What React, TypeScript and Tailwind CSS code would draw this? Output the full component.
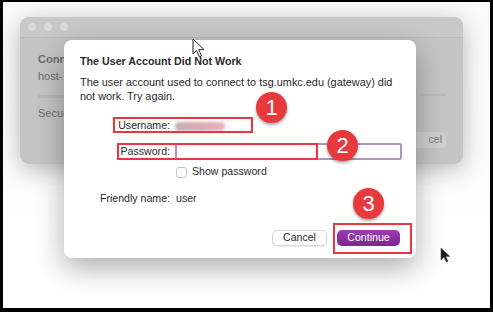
import React from "react";

const font = { fontFamily: '"Liberation Sans", Arial, sans-serif' };

const Badge = ({ n, className }: { n: string; className: string }) => (
  <div
    className={`absolute flex h-[31px] w-[31px] items-center justify-center rounded-full bg-[#e8393d] text-[22px] text-white shadow-[0_2px_3px_rgba(0,0,0,0.35)] ${className}`}
  >
    {n}
  </div>
);

const BackWindow = () => (
  <div className="absolute left-[17px] top-[15px] h-[147px] w-[443px] overflow-hidden rounded-[9px] bg-[#c4c4c4] shadow-[0_6px_24px_rgba(0,0,0,0.28)]">
    {/* title bar */}
    <div className="flex h-[21px] items-center gap-[8px] border-b border-[#b9b9b9] bg-[#c8c8c8] pl-[8px]">
      <div className="h-[8px] w-[8px] rounded-full bg-[#d8d8d8]" />
      <div className="h-[8px] w-[8px] rounded-full bg-[#d8d8d8]" />
      <div className="h-[8px] w-[8px] rounded-full bg-[#d8d8d8]" />
    </div>
    <div className="flex text-[11px] text-[#6c6c6c]">
      <div className="w-[50px] whitespace-nowrap pl-[18px]">
        <div className="mt-[14px] font-bold leading-[14px]">Conn</div>
        <div className="mt-[3px] leading-[14px]">host-</div>
        <div className="mt-[12px] h-[3px] w-full rounded bg-[#b8b8b8]" />
        <div className="mt-[8px] leading-[14px]">Secur</div>
      </div>
      <div className="ml-auto mr-[17px] flex flex-col items-end">
        <div className="mt-[56px] h-[2px] w-[26px] bg-[#bababa]" />
        <div className="mt-[36px] flex h-[16px] w-[44px] items-center justify-end rounded-[4px] bg-[#cfcfcf] pr-[4px] text-[10.5px] text-[#777]">
          cel
        </div>
      </div>
    </div>
  </div>
);

const Dialog = () => (
  <div className="absolute left-[61px] top-[38px] flex h-[218px] w-[352px] flex-col rounded-[8px] bg-white pl-[16px] pr-[14px] text-[#2a2a2a] shadow-[0_10px_28px_rgba(0,0,0,0.32)]">
    <div className="mt-[13px] text-[10.7px] font-bold leading-[16px]">The User Account Did Not Work</div>
    <div className="mt-[6px] whitespace-nowrap text-[10.9px] leading-[14px]">
      The user account used to connect to tsg.umkc.edu (gateway) did
      <br />
      not work. Try again.
    </div>

    <div className="mt-[15px] flex h-[16px] items-center text-[10.6px]">
      <div className="w-[90px] text-right">Username:</div>
      <div className="ml-[5px] h-[9px] w-[50px] rounded-sm bg-gradient-to-r from-[#bfb1b3] via-[#d9a9af] to-[#edb3b9] blur-[1.5px]" />
    </div>

    <div className="mt-[9px] flex h-[17px] items-center text-[10.6px]">
      <div className="w-[90px] text-right">Password:</div>
      <div className="ml-[5px] h-[17px] w-[227px] rounded-[2px] border-2 border-[#ae95bc] bg-white" />
    </div>

    <div className="mt-[6px] flex h-[12px] items-center text-[10.6px]">
      <div className="ml-[96px] h-[11px] w-[11px] rounded-[3px] border border-[#c4c4c4] bg-white" />
      <div className="ml-[5px]">Show password</div>
    </div>

    <div className="mt-[14px] flex h-[14px] items-center text-[10.6px]">
      <div className="w-[90px] text-right">Friendly name:</div>
      <div className="ml-[6px]">user</div>
    </div>

    <div className="mt-[24px] flex justify-end gap-[10px] pr-[2px]">
      <div className="flex h-[16px] w-[55px] items-center justify-center rounded-[5px] border border-[#d6d6d6] bg-white text-[10.6px] shadow-[0_1px_1px_rgba(0,0,0,0.08)]">
        Cancel
      </div>
      <div className="flex h-[16px] w-[63px] items-center justify-center rounded-[5px] bg-gradient-to-b from-[#9c3cb2] to-[#7f2394] text-[10.6px] text-white">
        Continue
      </div>
    </div>
  </div>
);

const ArrowOutline = () => (
  <svg className="absolute left-[189px] top-[36px]" width="14" height="21" viewBox="0 0 14 21">
    <path d="M1 1 L1 16 L4.5 12.5 L7.5 19 L9.5 18 L6.8 11.6 L12 11.6 Z" fill="white" stroke="#222" strokeWidth="1" strokeLinejoin="round" />
  </svg>
);

const ArrowBlack = () => (
  <svg className="absolute left-[437px] top-[245px]" width="12" height="17" viewBox="0 0 12 17">
    <path d="M1 1 L1 13 L4 10.2 L6.3 15 L8 14.2 L5.8 9.6 L10 9.6 Z" fill="#1a1a1a" stroke="#555" strokeWidth="0.6" />
  </svg>
);

export default function App() {
  return (
    <div className="h-[312px] w-[493px] overflow-hidden bg-black" style={font}>
      <div className="relative ml-[3px] mt-[2px] h-[306px] w-[487px] overflow-hidden bg-gradient-to-b from-[#fafafa] to-[#ffffff]">
        <BackWindow />
        <Dialog />

        {/* annotations */}
        <div className="absolute left-[110px] top-[115px] h-[16px] w-[140px] border-2 border-[#ec3540]" />
        <div className="absolute left-[114px] top-[141px] h-[17px] w-[201px] border-2 border-[#ec3540]" />
        <div className="absolute left-[330px] top-[221px] h-[31px] w-[79px] border-2 border-[#ec3540]" />
        <Badge n="1" className="left-[253px] top-[90px]" />
        <Badge n="2" className="left-[324px] top-[128px]" />
        <Badge n="3" className="left-[350px] top-[186px]" />

        <ArrowOutline />
        <ArrowBlack />
      </div>
    </div>
  );
}
